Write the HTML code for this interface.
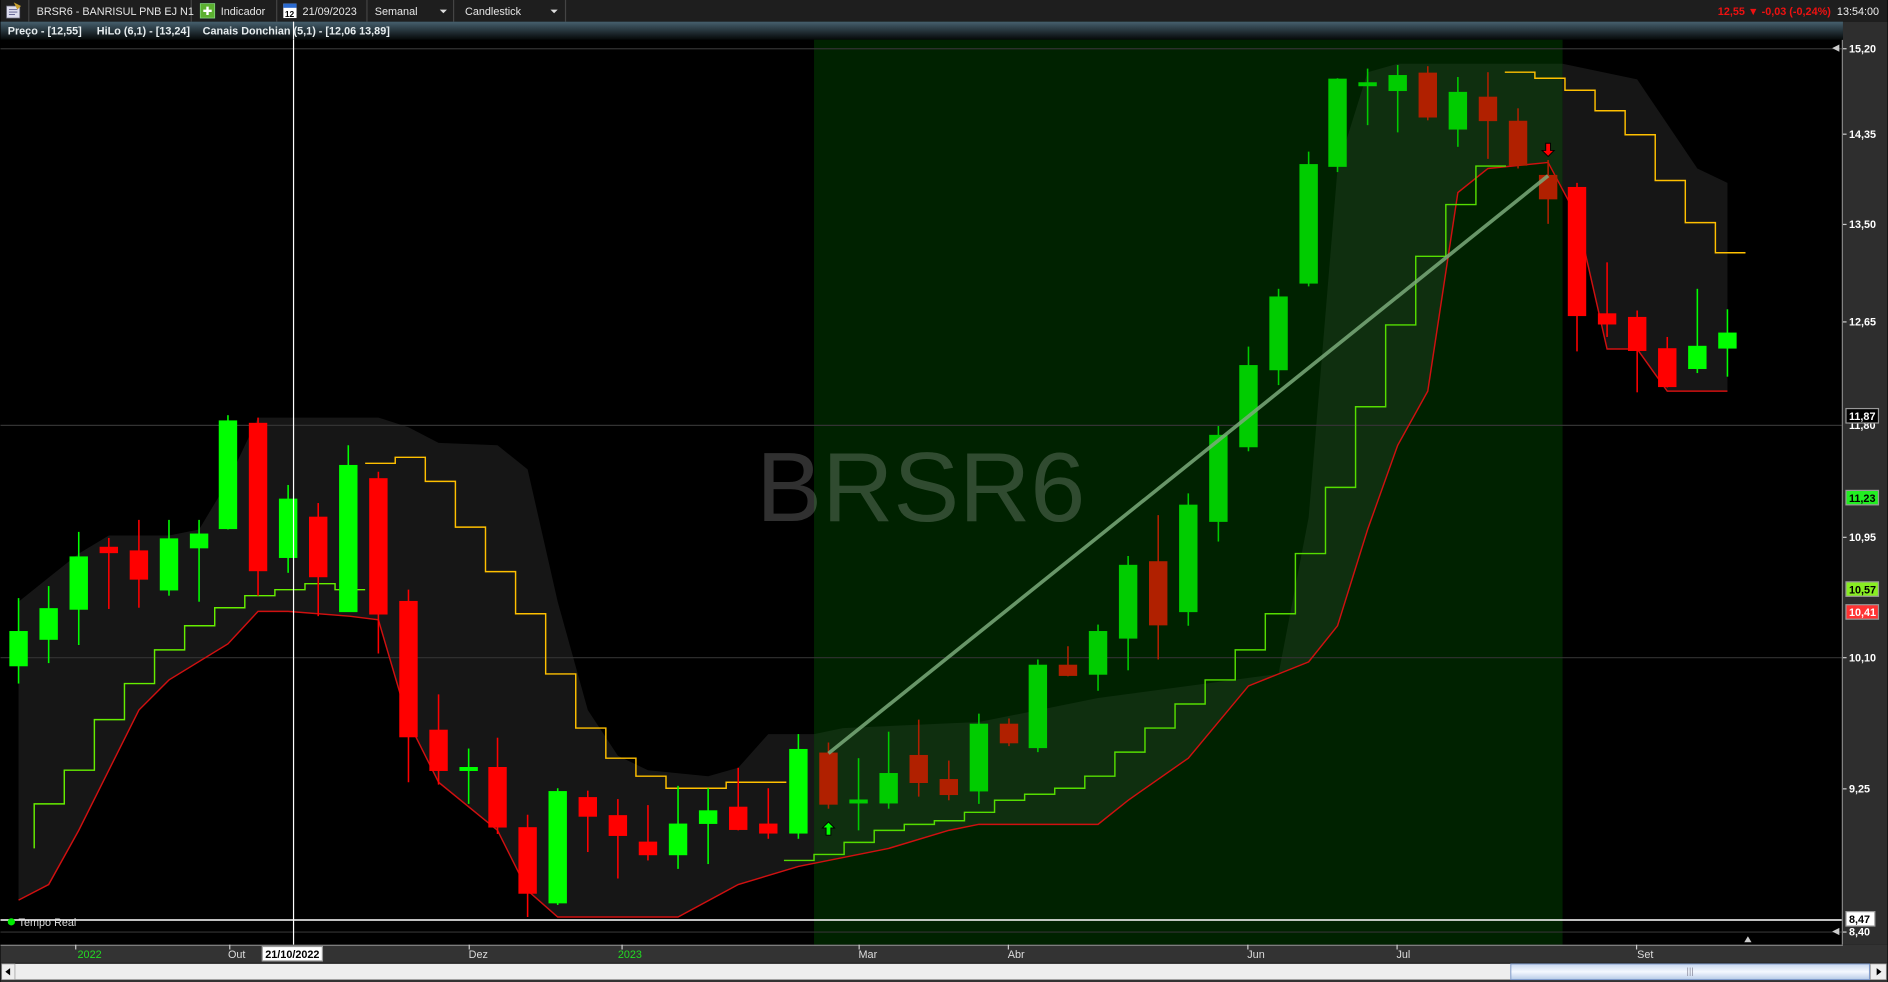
<!DOCTYPE html>
<html><head><meta charset="utf-8"><style>
html,body{margin:0;padding:0;background:#000;overflow:hidden}
svg{display:block}
text{font-family:"Liberation Sans",sans-serif}
</style></head><body>
<svg width="1888" height="982" viewBox="0 0 1568 816" xmlns="http://www.w3.org/2000/svg">
<defs>
<linearGradient id="lg" x1="0" y1="0" x2="0" y2="1"><stop offset="0" stop-color="#46606e"/><stop offset="1" stop-color="#050808"/></linearGradient>
<linearGradient id="sb" x1="0" y1="0" x2="0" y2="1"><stop offset="0" stop-color="#c8d8f0"/><stop offset=".5" stop-color="#f4f8ff"/><stop offset="1" stop-color="#b8cce8"/></linearGradient>
<clipPath id="cin"><rect x="676" y="18" width="622" height="767"/></clipPath>
<clipPath id="cout"><rect x="0" y="18" width="676" height="767"/><rect x="1298" y="18" width="240" height="767"/></clipPath>
</defs>
<rect width="1568" height="816" fill="#000"/>
<rect x="676" y="18" width="622" height="767" fill="#002200"/>
<g>
<polygon points="15,500 40,480 65,460 90,445 140,445 165,440 189,400 214,347 314,347 339,355 364,368 413,370 438,390 463,500 488,590 513,628 538,640 588,645 613,638 638,610 676,610 700,605 813,600 912,580 1062,560 1087,430 1111,140 1136,60 1161,53 1298,53 1360,66 1410,140 1435,152 1435,325 1385,325 1360,290 1335,290 1310,180 1286,135 1236,140 1211,160 1186,325 1161,370 1136,440 1111,520 1087,550 1037,570 987,630 937,665 912,685 813,685 788,690 738,705 663,720 613,735 563,762 463,762 438,740 413,690 364,650 339,600 314,515 290,512 239,508 214,508 189,535 140,565 115,590 65,690 40,735 15,748" fill="#161616" clip-path="url(#cout)"/>
<polygon points="15,500 40,480 65,460 90,445 140,445 165,440 189,400 214,347 314,347 339,355 364,368 413,370 438,390 463,500 488,590 513,628 538,640 588,645 613,638 638,610 676,610 700,605 813,600 912,580 1062,560 1087,430 1111,140 1136,60 1161,53 1298,53 1360,66 1410,140 1435,152 1435,325 1385,325 1360,290 1335,290 1310,180 1286,135 1236,140 1211,160 1186,325 1161,370 1136,440 1111,520 1087,550 1037,570 987,630 937,665 912,685 813,685 788,690 738,705 663,720 613,735 563,762 463,762 438,740 413,690 364,650 339,600 314,515 290,512 239,508 214,508 189,535 140,565 115,590 65,690 40,735 15,748" fill="#0f2f0f" clip-path="url(#cin)"/>
</g>
<g stroke="#333" stroke-width="1">
<line x1="0" y1="40.5" x2="1530" y2="40.5"/><line x1="0" y1="353.5" x2="1530" y2="353.5"/><line x1="0" y1="546.5" x2="1530" y2="546.5"/><line x1="0" y1="774.5" x2="1530" y2="774.5"/>
</g>
<text x="628" y="433" font-size="82" fill="#fff" fill-opacity=".19">BRSR6</text>
<polyline points="15,748 40,735 65,690 115,590 140,565 189,535 214,508 239,508 290,512 314,515 339,600 364,650 413,690 438,740 463,762 563,762 613,735 663,720 738,705 788,690 813,685 912,685 937,665 987,630 1037,570 1087,550 1111,520 1136,440 1161,370 1186,325 1211,160 1236,140 1286,135 1310,180 1335,290 1360,290 1385,325 1435,325" fill="none" stroke="#d01010" stroke-width="1.2"/>
<g fill="none" stroke-width="1.2">
<polyline stroke="#66ee00" points="28,705 28,668 53,668 53,640 78,640 78,598 103,598 103,568 128,568 128,540 153,540 153,520 178,520 178,505 203,505 203,495 228,495 228,490 253,490 253,485 278,485 278,490 303,490"/>
<polyline stroke="#ffc000" points="303,385 328,385 328,380 353,380 353,400 378,400 378,438 403,438 403,475 428,475 428,510 453,510 453,560 478,560 478,605 503,605 503,630 528,630 528,645 553,645 553,655 603,655 603,650 653,650"/>
<polyline stroke="#55dd00" points="651,715 676,715 676,710 701,710 701,700 726,700 726,690 751,690 751,685 776,685 776,682 801,682 801,675 826,675 826,665 851,665 851,660 876,660 876,655 901,655 901,645 926,645 926,625 951,625 951,605 976,605 976,585 1001,585 1001,565 1026,565 1026,540 1051,540 1051,510 1076,510 1076,460 1101,460 1101,405 1126,405 1126,338 1151,338 1151,270 1176,270 1176,213 1201,213 1201,170 1226,170 1226,138 1251,138"/>
<polyline stroke="#ffc000" points="1250,60 1275,60 1275,65 1300,65 1300,75 1325,75 1325,92 1350,92 1350,112 1375,112 1375,150 1400,150 1400,185 1425,185 1425,210 1450,210"/>
</g>
<g stroke-width="1.3">
<g stroke="#00ff00" fill="#00ff00">
<line x1="15" y1="497" x2="15" y2="568"/><rect x="8" y="525" width="14" height="28"/>
<line x1="40" y1="487" x2="40" y2="551"/><rect x="33" y="506" width="14" height="25"/>
<line x1="65" y1="442" x2="65" y2="536"/><rect x="58" y="463" width="14" height="43"/>
<line x1="140" y1="432" x2="140" y2="495"/><rect x="133" y="448" width="14" height="42"/>
<line x1="165" y1="432" x2="165" y2="500"/><rect x="158" y="444" width="14" height="11"/>
<line x1="189" y1="345" x2="189" y2="440"/><rect x="182" y="350" width="14" height="89"/>
<line x1="239" y1="403" x2="239" y2="476"/><rect x="232" y="415" width="14" height="48"/>
<line x1="289" y1="370" x2="289" y2="508"/><rect x="282" y="387" width="14" height="121"/>
<line x1="389" y1="622" x2="389" y2="668"/><rect x="382" y="638" width="14" height="2"/>
<line x1="463" y1="655" x2="463" y2="752"/><rect x="456" y="658" width="14" height="92"/>
<line x1="563" y1="653" x2="563" y2="722"/><rect x="556" y="685" width="14" height="25"/>
<line x1="588" y1="655" x2="588" y2="718"/><rect x="581" y="674" width="14" height="10"/>
<line x1="663" y1="610" x2="663" y2="697"/><rect x="656" y="623" width="14" height="69"/>
<line x1="1410" y1="240" x2="1410" y2="310"/><rect x="1403" y="288" width="14" height="18"/>
<line x1="1435" y1="257" x2="1435" y2="313"/><rect x="1428" y="277" width="14" height="12"/>
</g>
<g stroke="#ff0000" fill="#ff0000">
<line x1="90" y1="447" x2="90" y2="506"/><rect x="83" y="455" width="14" height="4"/>
<line x1="115" y1="432" x2="115" y2="505"/><rect x="108" y="458" width="14" height="23"/>
<line x1="214" y1="347" x2="214" y2="495"/><rect x="207" y="352" width="14" height="122"/>
<line x1="264" y1="418" x2="264" y2="512"/><rect x="257" y="430" width="14" height="49"/>
<line x1="314" y1="392" x2="314" y2="543"/><rect x="307" y="398" width="14" height="112"/>
<line x1="339" y1="490" x2="339" y2="650"/><rect x="332" y="500" width="14" height="112"/>
<line x1="364" y1="577" x2="364" y2="652"/><rect x="357" y="607" width="14" height="33"/>
<line x1="413" y1="613" x2="413" y2="693"/><rect x="406" y="638" width="14" height="49"/>
<line x1="438" y1="677" x2="438" y2="762"/><rect x="431" y="688" width="14" height="54"/>
<line x1="488" y1="657" x2="488" y2="708"/><rect x="481" y="663" width="14" height="15"/>
<line x1="513" y1="664" x2="513" y2="730"/><rect x="506" y="678" width="14" height="16"/>
<line x1="538" y1="669" x2="538" y2="715"/><rect x="531" y="700" width="14" height="10"/>
<line x1="613" y1="638" x2="613" y2="690"/><rect x="606" y="671" width="14" height="18"/>
<line x1="638" y1="655" x2="638" y2="697"/><rect x="631" y="685" width="14" height="7"/>
<line x1="1310" y1="152" x2="1310" y2="292"/><rect x="1303" y="156" width="14" height="106"/>
<line x1="1335" y1="218" x2="1335" y2="280"/><rect x="1328" y="261" width="14" height="8"/>
<line x1="1360" y1="258" x2="1360" y2="326"/><rect x="1353" y="264" width="14" height="27"/>
<line x1="1385" y1="280" x2="1385" y2="322"/><rect x="1378" y="290" width="14" height="31"/>
</g>
<g stroke="#00cc00" fill="#00cc00">
<line x1="713" y1="630" x2="713" y2="690"/><rect x="706" y="665" width="14" height="2"/>
<line x1="738" y1="608" x2="738" y2="672"/><rect x="731" y="643" width="14" height="24"/>
<line x1="813" y1="593" x2="813" y2="668"/><rect x="806" y="602" width="14" height="55"/>
<line x1="862" y1="548" x2="862" y2="625"/><rect x="855" y="553" width="14" height="68"/>
<line x1="912" y1="519" x2="912" y2="574"/><rect x="905" y="525" width="14" height="35"/>
<line x1="937" y1="462" x2="937" y2="557"/><rect x="930" y="470" width="14" height="60"/>
<line x1="987" y1="410" x2="987" y2="520"/><rect x="980" y="420" width="14" height="88"/>
<line x1="1012" y1="354" x2="1012" y2="450"/><rect x="1005" y="362" width="14" height="71"/>
<line x1="1037" y1="288" x2="1037" y2="375"/><rect x="1030" y="304" width="14" height="67"/>
<line x1="1062" y1="240" x2="1062" y2="320"/><rect x="1055" y="247" width="14" height="60"/>
<line x1="1087" y1="126" x2="1087" y2="238"/><rect x="1080" y="137" width="14" height="98"/>
<line x1="1111" y1="65" x2="1111" y2="143"/><rect x="1104" y="66" width="14" height="72"/>
<line x1="1136" y1="57" x2="1136" y2="104"/><rect x="1129" y="69" width="14" height="2"/>
<line x1="1161" y1="54" x2="1161" y2="110"/><rect x="1154" y="63" width="14" height="12"/>
<line x1="1211" y1="64" x2="1211" y2="122"/><rect x="1204" y="77" width="14" height="30"/>
</g>
<g stroke="#b02000" fill="#b02000">
<line x1="688" y1="617" x2="688" y2="672"/><rect x="681" y="626" width="14" height="42"/>
<line x1="763" y1="598" x2="763" y2="662"/><rect x="756" y="628" width="14" height="22"/>
<line x1="788" y1="632" x2="788" y2="665"/><rect x="781" y="648" width="14" height="12"/>
<line x1="838" y1="597" x2="838" y2="620"/><rect x="831" y="602" width="14" height="15"/>
<line x1="887" y1="537" x2="887" y2="562"/><rect x="880" y="553" width="14" height="8"/>
<line x1="962" y1="428" x2="962" y2="548"/><rect x="955" y="467" width="14" height="52"/>
<line x1="1186" y1="55" x2="1186" y2="100"/><rect x="1179" y="61" width="14" height="36"/>
<line x1="1236" y1="60" x2="1236" y2="132"/><rect x="1229" y="81" width="14" height="19"/>
<line x1="1261" y1="90" x2="1261" y2="140"/><rect x="1254" y="101" width="14" height="36"/>
<line x1="1286" y1="133" x2="1286" y2="186"/><rect x="1279" y="146" width="14" height="19"/>
</g>
</g>
<line x1="688" y1="626" x2="1286" y2="146" stroke="#7aaa7a" stroke-opacity=".85" stroke-width="3"/>
<path d="M688,683 l-5,5 h3 v6 h4 v-6 h3 z" fill="#00ff00" stroke="#000" stroke-width=".8"/>
<path d="M1286,130 l-5,-5 h3 v-6 h4 v6 h3 z" fill="#ff0000" stroke="#000" stroke-width=".8"/>
<line x1="243.5" y1="33" x2="243.5" y2="785" stroke="#fff" stroke-width="1"/>
<line x1="0" y1="764.5" x2="1530" y2="764.5" stroke="#fff" stroke-width="1.2"/>
<circle cx="9" cy="766" r="3" fill="#00ee00"/>
<text x="15" y="769.5" font-size="9" fill="#ddd">Tempo Real</text>
<rect x="1531" y="18" width="37" height="767" fill="#2e2e2e"/>
<line x1="1530.5" y1="33" x2="1530.5" y2="785" stroke="#888"/>
<g font-size="9" font-weight="bold" fill="#fff">
<g stroke="#ccc"><line x1="1531" y1="40.5" x2="1534" y2="40.5"/><line x1="1531" y1="111.5" x2="1534" y2="111.5"/><line x1="1531" y1="186.5" x2="1534" y2="186.5"/><line x1="1531" y1="267.5" x2="1534" y2="267.5"/><line x1="1531" y1="446.5" x2="1534" y2="446.5"/><line x1="1531" y1="546.5" x2="1534" y2="546.5"/><line x1="1531" y1="655.5" x2="1534" y2="655.5"/><line x1="1531" y1="774.5" x2="1534" y2="774.5"/></g>
<path d="M1522,40 l6,-3 v6 z M1522,774 l6,-3 v6 z" fill="#ccc"/>
<text x="1536" y="43.5">15,20</text>
<text x="1536" y="114.5">14,35</text>
<text x="1536" y="189.5">13,50</text>
<text x="1536" y="270.5">12,65</text>
<text x="1536" y="356.5">11,80</text>
<text x="1536" y="449.5">10,95</text>
<text x="1536" y="549.5">10,10</text>
<text x="1536" y="658.5">9,25</text>
<text x="1536" y="777.5">8,40</text>
<rect x="1533.5" y="339.5" width="27" height="12" fill="#000" stroke="#999"/><text x="1536" y="349">11,87</text>
<rect x="1533.5" y="407.5" width="27" height="12" fill="#22ee22" stroke="#999"/><text x="1536" y="417" fill="#000">11,23</text>
<rect x="1533.5" y="483.5" width="27" height="12" fill="#88ee22" stroke="#999"/><text x="1536" y="493" fill="#000">10,57</text>
<rect x="1533.5" y="502.5" width="27" height="12" fill="#ff3333" stroke="#999"/><text x="1536" y="512">10,41</text>
<rect x="1533.5" y="757.5" width="24" height="12" fill="#fff" stroke="#999"/><text x="1536" y="767" fill="#000">8,47</text>
</g>
<rect x="0" y="785" width="1568" height="15" fill="#333"/>
<line x1="0" y1="785.5" x2="1531" y2="785.5" stroke="#888"/>
<g stroke="#ccc"><line x1="62.5" y1="785" x2="62.5" y2="789"/><line x1="190.5" y1="785" x2="190.5" y2="789"/><line x1="389.5" y1="785" x2="389.5" y2="789"/><line x1="516.5" y1="785" x2="516.5" y2="789"/><line x1="713.5" y1="785" x2="713.5" y2="789"/><line x1="837.5" y1="785" x2="837.5" y2="789"/><line x1="1036.5" y1="785" x2="1036.5" y2="789"/><line x1="1160.5" y1="785" x2="1160.5" y2="789"/><line x1="1359.5" y1="785" x2="1359.5" y2="789"/></g>
<path d="M1452,778 l-3,5 h6 z" fill="#ccc"/>
<g font-size="9" fill="#ddd">
<text x="64" y="796" fill="#22dd22">2022</text>
<text x="189" y="796">Out</text>
<text x="389" y="796">Dez</text>
<text x="513" y="796" fill="#22dd22">2023</text>
<text x="713" y="796">Mar</text>
<text x="837" y="796">Abr</text>
<text x="1036" y="796">Jun</text>
<text x="1160" y="796">Jul</text>
<text x="1360" y="796">Set</text>
</g>
<rect x="217.5" y="786.5" width="50" height="12" fill="#fff" stroke="#999"/>
<text x="220" y="796" font-size="9" font-weight="bold" fill="#000">21/10/2022</text>
<rect x="0" y="800" width="1568" height="16" fill="#333"/>
<rect x="1" y="801" width="1566" height="13" fill="#eee"/>
<rect x="1" y="801" width="11" height="13" fill="#eee" stroke="#999" stroke-width=".6"/>
<path d="M4,807.5 l4,-3 v6 z" fill="#000"/>
<rect x="1255" y="801" width="298" height="13" fill="url(#sb)" stroke="#7a96c8" stroke-width=".8"/>
<path d="M1402,804 v7 M1404,804 v7 M1406,804 v7" stroke="#889" stroke-width=".6"/>
<rect x="1554" y="801" width="13" height="13" fill="#eee" stroke="#999" stroke-width=".6"/>
<path d="M1563,807.5 l-4,-3 v6 z" fill="#000"/>
<rect x="0" y="0" width="1568" height="18" fill="#1e1e1e"/>
<g stroke="#444"><line x1="23.5" y1="0" x2="23.5" y2="18"/><line x1="158.5" y1="0" x2="158.5" y2="18"/><line x1="229.5" y1="0" x2="229.5" y2="18"/><line x1="304.5" y1="0" x2="304.5" y2="18"/><line x1="376.5" y1="0" x2="376.5" y2="18"/><line x1="469.5" y1="0" x2="469.5" y2="18"/></g>
<rect x="5" y="5" width="11" height="10" fill="#dde" stroke="#667" stroke-width=".6"/>
<path d="M7,8 h7 M7,10 h7 M7,12 h5" stroke="#558" stroke-width=".7"/>
<path d="M11,2 l6,3 -3,3 z" fill="#c9a030"/>
<text x="30" y="12.5" font-size="9" fill="#e6e6e6">BRSR6 - BANRISUL PNB EJ N1</text>
<rect x="166" y="3" width="12" height="12" fill="#5cb030" stroke="#8d8" stroke-width=".6"/>
<path d="M172,5.5 v7 M168.5,9 h7" stroke="#fff" stroke-width="2"/>
<text x="183" y="12.5" font-size="9" fill="#e6e6e6">Indicador</text>
<rect x="235" y="3" width="11" height="12" fill="#fff"/>
<rect x="235" y="3" width="11" height="3.5" fill="#2a6ad0"/>
<text x="236.3" y="14" font-size="7" font-weight="bold" fill="#000">12</text>
<text x="251" y="12.5" font-size="9" fill="#e6e6e6">21/09/2023</text>
<text x="311" y="12.5" font-size="9" fill="#e6e6e6">Semanal</text>
<path d="M365,8 h6 l-3,3 z" fill="#ddd"/>
<text x="386" y="12.5" font-size="9" fill="#e6e6e6">Candlestick</text>
<path d="M457,8 h6 l-3,3 z" fill="#ddd"/>
<text x="1427" y="12.5" font-size="9" font-weight="bold" fill="#ee1111">12,55 ▼ -0,03 (-0,24%)</text>
<text x="1526" y="12.5" font-size="9" fill="#f0f0f0">13:54:00</text>
<rect x="0" y="18" width="1531" height="15" fill="url(#lg)"/>
<line x1="243.5" y1="18" x2="243.5" y2="33" stroke="#fff"/>
<g font-size="9" font-weight="bold" fill="#e8eef0">
<text x="6" y="28.5">Preço - [12,55]</text>
<text x="80" y="28.5">HiLo (6,1) - [13,24]</text>
<text x="168" y="28.5">Canais Donchian (5,1) - [12,06  13,89]</text>
</g>
</svg>
</body></html>
